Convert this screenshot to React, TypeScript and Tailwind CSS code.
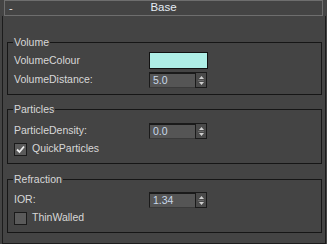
const font = { fontFamily: '"Liberation Sans", Arial, sans-serif' };

const Group = ({ title, className, children }: { title: string; className: string; children: React.ReactNode }) => (
    <div className={`relative ml-[4px] mr-[3px] border border-[#161616] pl-[6px] pr-[6px] ${className}`}>
        <span className="absolute left-[5px] top-[-7px] bg-[#444444] px-[1px] text-[10.5px] leading-[12px] text-[#d8d8d8]">
            {title}
        </span>
        {children}
    </div>
);

const Spinner = ({ value }: { value: string }) => (
    <div className="flex h-[16px] w-[58px]">
        <div className="flex h-[16px] w-[46px] items-center border-t-2 border-l border-b border-[#1a1a1a] border-b-[#3a3a3a] bg-[#555555] pl-[3px] text-[10.5px] leading-none text-[#c9d9ea]">
            {value}
        </div>
        <div className="flex h-[16px] w-[12px] flex-col items-center justify-center gap-[1px] border border-[#1a1a1a] bg-[#4a4a4a]">
            <svg width="5" height="3" viewBox="0 0 5 3"><path d="M2.5 0 L5 3 L0 3 Z" fill="#d0d0d0" /></svg>
            <div className="h-[1px] w-[6px] bg-[#6a6a6a]" />
            <svg width="5" height="3" viewBox="0 0 5 3"><path d="M0 0 L5 0 L2.5 3 Z" fill="#d0d0d0" /></svg>
        </div>
    </div>
);

const Row = ({ label, children }: { label: string; children: React.ReactNode }) => (
    <div className="flex items-center">
        <span className="w-[135px] text-[10.5px] text-[#d8d8d8]">{label}</span>
        {children}
    </div>
);

const Check = ({ label, checked }: { label: string; checked?: boolean }) => (
    <div className="flex h-[16px] items-center gap-[5px]">
        <div className="flex h-[13px] w-[13px] items-center justify-center border border-[#1a1a1a] bg-[#5a5a5a]">
            {checked && (
                <svg width="9" height="9" viewBox="0 0 9 9">
                    <path d="M1 4.5 L3.5 7 L8 1.5" stroke="#f0f0f0" strokeWidth="1.8" fill="none" />
                </svg>
            )}
        </div>
        <span className="text-[10.5px] text-[#d8d8d8]">{label}</span>
    </div>
);

export default function App() {
    return (
        <div className="h-[244px] w-[327px] overflow-hidden bg-[#444444]" style={font}>
            {/* rollout header */}
            <div className="relative mx-[4px] flex h-[16px] items-center justify-center border border-[#6e6e6e]">
                <span className="absolute left-[4px] top-[1px] text-[11px] leading-[12px] text-[#e6e6e6]">-</span>
                <span className="text-[11.5px] leading-none text-[#e4ecf4]">Base</span>
            </div>

            <div className="ml-[2px] h-[228px] w-[324px] border-x border-b border-[#1c1c1c] pt-[26px]">
                <Group title="Volume" className="pt-[9px] pb-[6px]">
                    <Row label="VolumeColour">
                        <div className="h-[17px] w-[59px] border border-[#111111] bg-[#aeeee6]" />
                    </Row>
                    <div className="mt-[3px]">
                        <Row label="VolumeDistance:">
                            <Spinner value="5.0" />
                        </Row>
                    </div>
                </Group>

                <Group title="Particles" className="mt-[14px] pt-[13px] pb-[6px]">
                    <Row label="ParticleDensity:">
                        <Spinner value="0.0" />
                    </Row>
                    <div className="mt-[2px]">
                        <Check label="QuickParticles" checked />
                    </div>
                </Group>

                <Group title="Refraction" className="mt-[15px] pt-[12px] pb-[6px]">
                    <Row label="IOR:">
                        <Spinner value="1.34" />
                    </Row>
                    <div className="mt-[2px]">
                        <Check label="ThinWalled" />
                    </div>
                </Group>
            </div>
        </div>
    );
}
